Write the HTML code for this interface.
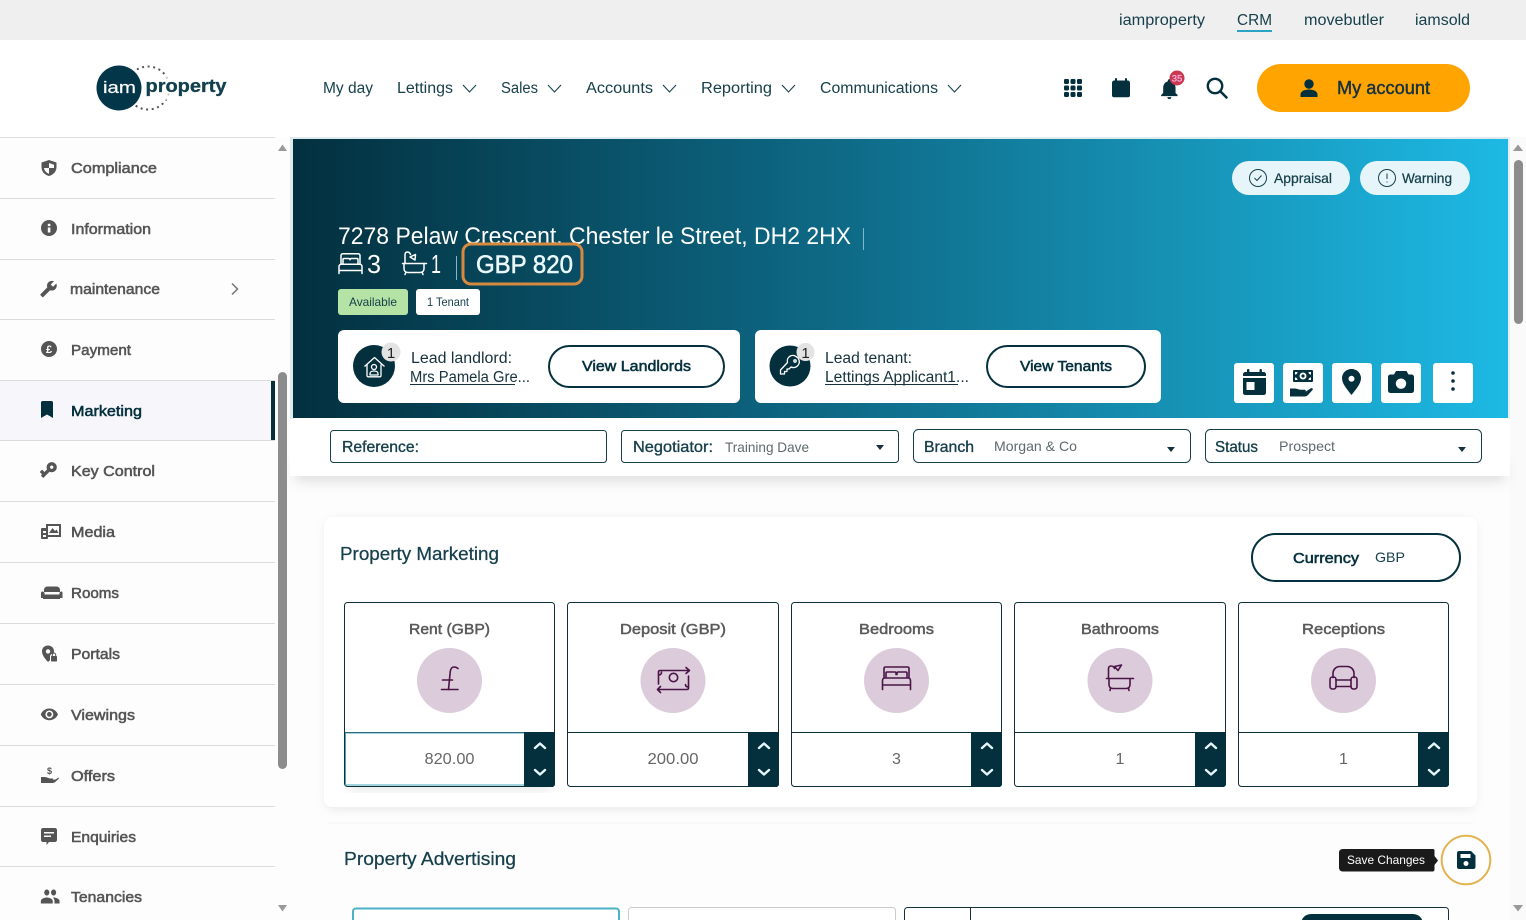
<!DOCTYPE html>
<html lang="en"><head><meta charset="utf-8"><title>iam property - Marketing</title>
<style>
html,body{margin:0;padding:0;width:1526px;height:920px;overflow:hidden;background:#fdfdfd}
svg{display:block;position:absolute;left:0;top:0}
text{font-family:"Liberation Sans",sans-serif;white-space:pre}
.top{font-size:15.5px;fill:#17404c}
.nav{font-size:15.5px;fill:#17404c}
.side{font-size:15px;fill:#555;stroke:#555;stroke-width:.55px}
.wh{fill:#fff}
.lead{font-size:15.5px;fill:#17323c}
.btn{font-size:15px;fill:#05303e;stroke:#05303e;stroke-width:.55px}
.flab{font-size:16px;fill:#17404c;stroke:#17404c;stroke-width:.35px}
.fval{font-size:14px;fill:#5e6a6e}
.lab{font-size:15px;fill:#5a5a5a;stroke:#5a5a5a;stroke-width:.5px;text-anchor:middle}
.val{font-size:16px;fill:#666;text-anchor:middle}
.h{font-size:18px;fill:#17404c;stroke:#17404c;stroke-width:.25px}
.ic{fill:none;stroke:#4a1446;stroke-width:1.6;stroke-linecap:round;stroke-linejoin:round}
.chev{fill:none;stroke:#17404c;stroke-width:1.1}
.sp{fill:none;stroke:#e6f5fa;stroke-width:2.4;stroke-linecap:round;stroke-linejoin:round}
.si{fill:#555}
.wi{fill:none;stroke:#fff;stroke-width:1.5;stroke-linejoin:round;stroke-linecap:round}
.line{stroke:#dcdcdc;stroke-width:1}
</style></head><body>
<svg width="1526" height="920" viewBox="0 0 1526 920" xmlns="http://www.w3.org/2000/svg">
<defs>
<linearGradient id="g" gradientUnits="userSpaceOnUse" x1="293" y1="0" x2="1508" y2="0">
<stop offset="0" stop-color="#03303f"/><stop offset=".45" stop-color="#0e6a87"/><stop offset=".72" stop-color="#1691b4"/><stop offset="1" stop-color="#1db9e4"/>
</linearGradient>
<filter id="s1" x="-5%" y="-100%" width="110%" height="300%"><feGaussianBlur stdDeviation="7"/></filter>
<filter id="s2" x="-5%" y="-10%" width="110%" height="120%"><feGaussianBlur stdDeviation="5"/></filter>
</defs>

<!-- top bar -->
<rect width="1526" height="40" fill="#efefef"/>
<rect y="40" width="1526" height="97" fill="#fff"/>
<text class="top" x="1119" y="25" textLength="86" lengthAdjust="spacingAndGlyphs">iamproperty</text>
<text class="top" x="1237" y="25" textLength="35" lengthAdjust="spacingAndGlyphs">CRM</text>
<rect x="1237" y="30" width="35" height="2" fill="#2aa3c4"/>
<text class="top" x="1304" y="25" textLength="80" lengthAdjust="spacingAndGlyphs">movebutler</text>
<text class="top" x="1415" y="25" textLength="55" lengthAdjust="spacingAndGlyphs">iamsold</text>

<!-- logo -->
<circle cx="148" cy="88" r="21.5" fill="none" stroke="#555" stroke-width="2" stroke-dasharray="2 3.6"/>
<circle cx="119" cy="88" r="22.5" fill="#04364a"/>
<text x="103" y="93" font-size="17" fill="#fff" stroke="#fff" stroke-width=".2" textLength="33" lengthAdjust="spacingAndGlyphs">iam</text>
<rect x="144" y="76" width="84" height="24" fill="#fff" opacity=".7"/>
<text x="145.500" y="92" font-size="18" font-weight="bold" fill="#12404e" stroke="#12404e" stroke-width=".3" textLength="81" lengthAdjust="spacingAndGlyphs">property</text>

<!-- nav -->
<text class="nav" x="323" y="93" textLength="50" lengthAdjust="spacingAndGlyphs">My day</text>
<text class="nav" x="397" y="93" textLength="56" lengthAdjust="spacingAndGlyphs">Lettings</text>
<path class="chev" d="M463 85l6.500 7 6.500-7"/>
<text class="nav" x="501" y="93" textLength="37" lengthAdjust="spacingAndGlyphs">Sales</text>
<path class="chev" d="M548 85l6.500 7 6.500-7"/>
<text class="nav" x="586" y="93" textLength="67" lengthAdjust="spacingAndGlyphs">Accounts</text>
<path class="chev" d="M663 85l6.500 7 6.500-7"/>
<text class="nav" x="701" y="93" textLength="71" lengthAdjust="spacingAndGlyphs">Reporting</text>
<path class="chev" d="M782 85l6.500 7 6.500-7"/>
<text class="nav" x="820" y="93" textLength="118" lengthAdjust="spacingAndGlyphs">Communications</text>
<path class="chev" d="M948 85l6.500 7 6.500-7"/>

<!-- header icons -->
<g fill="#04303e">
<rect x="1064" y="79" width="5" height="5" rx="1.200"/><rect x="1070.500" y="79" width="5" height="5" rx="1.200"/><rect x="1077" y="79" width="5" height="5" rx="1.200"/>
<rect x="1064" y="85.500" width="5" height="5" rx="1.200"/><rect x="1070.500" y="85.500" width="5" height="5" rx="1.200"/><rect x="1077" y="85.500" width="5" height="5" rx="1.200"/>
<rect x="1064" y="92" width="5" height="5" rx="1.200"/><rect x="1070.500" y="92" width="5" height="5" rx="1.200"/><rect x="1077" y="92" width="5" height="5" rx="1.200"/>
<path d="M1112 83c0-1.500 1-2.500 2.500-2.500h13c1.500 0 2.500 1 2.500 2.500v12.500c0 1-.8 1.800-1.800 1.800h-14.400c-1 0-1.800-.8-1.800-1.800z"/>
<rect x="1115" y="78" width="2" height="5" rx="1"/><rect x="1125" y="78" width="2" height="5" rx="1"/>
<g transform="translate(1157,76.500) scale(1.030)"><path d="M12 22c1.100 0 2-.9 2-2h-4c0 1.100.9 2 2 2zm6-6v-5c0-3.070-1.630-5.640-4.500-6.320V4c0-.83-.67-1.500-1.500-1.500s-1.500.67-1.500 1.500v.68C7.640 5.360 6 7.920 6 11v5l-2 2v1h16v-1l-2-2z"/></g>
</g>
<circle cx="1177" cy="78" r="7.500" fill="#c8384f"/>
<text x="1177" y="81.500" font-size="9.500" fill="#fbe" stroke="#fbe" stroke-width=".2" text-anchor="middle">35</text>
<circle cx="1215" cy="86" r="7.200" fill="none" stroke="#04303e" stroke-width="2.400"/>
<path d="M1220.500 91.500l6 6" stroke="#04303e" stroke-width="2.600" stroke-linecap="round"/>

<!-- account -->
<rect x="1257" y="64" width="213" height="48" rx="24" fill="#ffa400"/>
<g fill="#04303e"><circle cx="1309" cy="84" r="4.700"/><path d="M1300.500 97v-2.500c0-3.200 4-5 8.500-5s8.500 1.800 8.500 5V97z"/></g>
<text x="1337" y="94" font-size="18" fill="#17323c" stroke="#17323c" stroke-width=".45" textLength="93" lengthAdjust="spacingAndGlyphs">My account</text>

<!-- sidebar -->
<rect y="137" width="275" height="783" fill="#fdfdfd"/>
<rect y="381" width="271" height="59" fill="#f7f7fb"/>
<rect x="271" y="381" width="4" height="60" fill="#04303e"/>
<g class="line">
<path d="M0 137.500h275M0 198.500h275M0 259.500h275M0 319.500h275M0 380.500h275M0 440.500h275M0 501.500h275M0 562.500h275M0 623.500h275M0 684.500h275M0 745.500h275M0 806.500h275M0 866.500h275"/>
</g>
<text class="side" x="71" y="173" textLength="86" lengthAdjust="spacingAndGlyphs">Compliance</text>
<text class="side" x="71" y="234" textLength="80" lengthAdjust="spacingAndGlyphs">Information</text>
<text class="side" x="70" y="294" textLength="90" lengthAdjust="spacingAndGlyphs">maintenance</text>
<text class="side" x="71" y="355" textLength="60" lengthAdjust="spacingAndGlyphs">Payment</text>
<text x="71" y="416" font-size="15" fill="#04303e" stroke="#04303e" stroke-width=".55" textLength="71" lengthAdjust="spacingAndGlyphs">Marketing</text>
<text class="side" x="71" y="476" textLength="84" lengthAdjust="spacingAndGlyphs">Key Control</text>
<text class="side" x="71" y="537" textLength="44" lengthAdjust="spacingAndGlyphs">Media</text>
<text class="side" x="71" y="598" textLength="48" lengthAdjust="spacingAndGlyphs">Rooms</text>
<text class="side" x="71" y="659" textLength="49" lengthAdjust="spacingAndGlyphs">Portals</text>
<text class="side" x="71" y="720" textLength="64" lengthAdjust="spacingAndGlyphs">Viewings</text>
<text class="side" x="71" y="781" textLength="44" lengthAdjust="spacingAndGlyphs">Offers</text>
<text class="side" x="71" y="842" textLength="65" lengthAdjust="spacingAndGlyphs">Enquiries</text>
<text class="side" x="71" y="902" textLength="71" lengthAdjust="spacingAndGlyphs">Tenancies</text>
<path d="M232 283.500l5.500 5.500-5.500 5.500" fill="none" stroke="#777" stroke-width="1.500"/>

<!-- sidebar icons -->
<path class="si" fill-rule="evenodd" d="M49 160l7.500 2.500v4.500c0 4.500-3 7.800-7.500 9-4.500-1.200-7.500-4.500-7.500-9v-4.500zM49 163v5h-5c.3 2.700 2.300 4.800 5 5.800v-5.800h5v-3.200z"/>
<circle class="si" cx="49" cy="228" r="8"/>
<rect x="47.800" y="227.500" width="2.600" height="5" fill="#fff"/><rect x="47.800" y="223.800" width="2.600" height="2.300" fill="#fff"/>
<g transform="translate(57.500,280) scale(-.75,.75)"><path class="si" d="M22.700 19l-9.100-9.100c.9-2.300.4-5-1.500-6.900-2-2-5-2.400-7.400-1.300L9 6 6 9 1.600 4.700C.4 7.100.9 10.100 2.900 12.100c1.900 1.900 4.600 2.400 6.900 1.500l9.100 9.100c.4.400 1 .4 1.400 0l2.300-2.300c.5-.4.500-1.100.1-1.400z"/></g>
<circle class="si" cx="49" cy="349" r="8"/>
<text x="49" y="353" font-size="11" font-weight="bold" fill="#fff" text-anchor="middle">£</text>
<path d="M41 402.500c0-.8.700-1.500 1.500-1.500h9c.8 0 1.500.7 1.500 1.500V418l-6-3.500-6 3.500z" fill="#04303e"/>
<g transform="translate(38.500,460) scale(.85)"><path class="si" transform="rotate(135 12 12)" d="M12.650 10C11.830 7.670 9.610 6 7 6c-3.310 0-6 2.690-6 6s2.690 6 6 6c2.610 0 4.830-1.670 5.650-4H17v4h4v-4h2v-4H12.650zM7 14c-1.100 0-2-.9-2-2s.9-2 2-2 2 .9 2 2-.9 2-2 2z"/></g>
<g class="si"><path d="M46 524h15v13H48v-2h11v-9H48v3h-2z"/><path d="M49 533l3.500-5 2.500 3 1.500-1.500 2 3.500z"/><path fill-rule="evenodd" d="M41 529c0-.6.400-1 1-1h6v10c0 .6-.4 1-1 1h-5c-.6 0-1-.4-1-1zM43 531v2h3v-2zM43 535v2h3v-2z"/></g>
<g class="si"><path d="M44 590c0-2 1.500-3.500 3.500-3.500h9c2 0 3.500 1.500 3.500 3.500v2h-16z"/><path d="M41 593c0-.8.700-1.500 1.500-1.500s2 .7 2 1.500v1.500h15V593c0-.8 1-1.500 2-1.500s.5 0 .5 0 .5.700.5 1.500v5h-2.500v1h-17v-1H41z"/></g>
<g class="si"><path fill-rule="evenodd" d="M48 645.500c3.500 0 6 2.500 6 5.700 0 1-.2 1.800-.6 2.500-2-.2-3.400 1.300-3.400 3v3.500l-2 1.800c-3-3.300-6-7-6-10.800 0-3.200 2.500-5.700 6-5.700zM48 649.200a2.200 2.200 0 100 4.400 2.200 2.200 0 000-4.400z"/><rect x="51" y="656" width="6" height="5.500" rx=".7"/><path d="M52.300 656v-1.200a1.700 1.700 0 013.400 0v1.200" fill="none" stroke="#555" stroke-width="1"/></g>
<g transform="translate(40,705) scale(.78)"><path class="si" d="M12 4.500C7 4.500 2.730 7.610 1 12c1.730 4.390 6 7.500 11 7.500s9.270-3.110 11-7.500c-1.730-4.390-6-7.500-11-7.500zM12 17c-2.760 0-5-2.240-5-5s2.240-5 5-5 5 2.240 5 5-2.240 5-5 5zm0-8c-1.660 0-3 1.340-3 3s1.340 3 3 3 3-1.340 3-3-1.340-3-3-3z"/></g>
<g class="si"><path d="M41 777h3.500c2.500 0 4 1.500 6 1.500h2c1 0 1 1.500 0 1.500h-2.500l5.500-.5 3-2 .5 1-3.800 3.500c-1 .8-2 1-3.200 1H41z"/></g>
<text x="49.500" y="774" font-size="9" font-weight="bold" fill="#555" text-anchor="middle">$</text>
<path class="si" fill-rule="evenodd" d="M43 828h12c1.100 0 2 .9 2 2v10c0 1.100-.9 2-2 2h-6l-2.500 3v-3H43c-1.100 0-2-.9-2-2v-10c0-1.100.9-2 2-2zM44 832v1.500h10V832zM44 835.500V837h7v-1.500z"/>
<g transform="translate(40,884.500) scale(.85,1)"><path class="si" d="M16 11c1.660 0 2.990-1.340 2.990-3S17.660 5 16 5c-1.660 0-3 1.340-3 3s1.340 3 3 3zm-8 0c1.660 0 2.990-1.340 2.990-3S9.660 5 8 5C6.340 5 5 6.340 5 8s1.340 3 3 3zm0 2c-2.330 0-7 1.170-7 3.500V19h14v-2.500c0-2.330-4.670-3.500-7-3.500zm8 0c-.29 0-.62.020-.97.050 1.160.84 1.970 1.970 1.970 3.450V19h6v-2.500c0-2.330-4.670-3.500-7-3.500z"/></g>

<!-- sidebar scrollbar -->
<path d="M278 151l4.500-6.500 4.500 6.500z" fill="#999"/>
<rect x="278" y="372" width="9" height="397" rx="4.500" fill="#8c8c8c"/>
<path d="M278 905l4.500 6.500 4.500-6.500z" fill="#999"/>

<!-- main scrollbar -->
<rect x="1510" y="137" width="16" height="783" fill="#fafafa"/>
<path d="M1513 151l5-6.500 5 6.500z" fill="#999"/>
<rect x="1514" y="160" width="9" height="164" rx="4.500" fill="#8c8c8c"/>
<path d="M1513 905l5 6.500 5-6.500z" fill="#999"/>

<!-- hero -->
<rect x="295" y="466" width="1210" height="14" fill="#c8c8c8" filter="url(#s1)" opacity=".7"/>
<rect x="290" y="137" width="1220" height="339" fill="#fff"/>
<rect x="290" y="137" width="1220" height="2" fill="#dfeaee"/>
<rect x="290" y="139" width="3" height="280" fill="#dfeaee"/>
<rect x="1508" y="137" width="2" height="282" fill="#e8eef0"/>
<rect x="293" y="139" width="1215" height="279" fill="url(#g)"/>

<rect x="1232" y="161" width="118" height="34" rx="17" fill="#e6f5fa"/>
<circle cx="1258" cy="178" r="8.500" fill="none" stroke="#17404c" stroke-width="1"/>
<path d="M1254.500 178l2.500 2.500 4.500-5" fill="none" stroke="#17404c" stroke-width="1"/>
<text x="1274" y="183" font-size="14" fill="#17404c" stroke="#17404c" stroke-width=".25" textLength="58" lengthAdjust="spacingAndGlyphs">Appraisal</text>
<rect x="1360" y="161" width="110" height="34" rx="17" fill="#e6f5fa"/>
<circle cx="1387" cy="178" r="8.500" fill="none" stroke="#17404c" stroke-width="1"/>
<path d="M1387 173.500v5.500M1387 181.500v1" fill="none" stroke="#17404c" stroke-width="1"/>
<text x="1402" y="183" font-size="14" fill="#17404c" stroke="#17404c" stroke-width=".25" textLength="50" lengthAdjust="spacingAndGlyphs">Warning</text>

<text class="wh" x="338" y="244" font-size="24" textLength="513" lengthAdjust="spacingAndGlyphs">7278 Pelaw Crescent, Chester le Street, DH2 2HX</text>
<path d="M863.500 228v22" stroke="#7fb8c8" stroke-width="1"/>

<!-- bed small -->
<g class="wi"><path d="M341 264v-8.500c0-1 .8-1.800 1.800-1.800h15.400c1 0 1.800.8 1.800 1.800v8.500"/><path d="M343 264v-4.500c0-.6.400-1 1-1h4.800c.6 0 1.200.5 1.200 1.200v-.2c0-.5.600-1 1.200-1h5.800c.6 0 1 .4 1 1v4.500"/><path d="M339 273.500v-7c0-1.300 1-2.300 2.300-2.300h18.400c1.300 0 2.300 1 2.300 2.300v7M339 270.500h23"/></g>
<text class="wh" x="367" y="273" font-size="26" textLength="14" lengthAdjust="spacingAndGlyphs">3</text>
<!-- bath small -->
<g class="wi"><path d="M405 263v-8.200c0-1.800 1-2.800 2.500-2.800s2.500 1 3 2.500"/><path d="M410 257l5.500-2.500-.5 5.500z" fill="none"/><path d="M402.500 263.500h24"/><path d="M404 263.500v5c0 2.500 1.500 4 4 4h12c2.500 0 4-1.500 4-4v-5M406 272l-1 2.500M422 272l1 2.500"/></g>
<text class="wh" x="431" y="273" font-size="26" textLength="10" lengthAdjust="spacingAndGlyphs">1</text>
<path d="M456.500 256v24" stroke="#7fb8c8" stroke-width="1"/>

<rect x="463" y="244" width="119" height="40" rx="8" fill="url(#g)" stroke="#d58a40" stroke-width="3"/>
<text x="476" y="273" font-size="25" fill="#eaf8fb" stroke="#eaf8fb" stroke-width=".55" textLength="97" lengthAdjust="spacingAndGlyphs">GBP 820</text>

<rect x="338" y="289" width="70" height="26" rx="3" fill="#b5e3a5"/>
<text x="349" y="306" font-size="12" fill="#17404c" textLength="48" lengthAdjust="spacingAndGlyphs">Available</text>
<rect x="416" y="289" width="64" height="26" rx="3" fill="#fff"/>
<text x="427" y="306" font-size="12" fill="#17404c" textLength="42" lengthAdjust="spacingAndGlyphs">1 Tenant</text>

<!-- landlord -->
<rect x="338" y="330" width="402" height="73" rx="6" fill="#fff"/>
<circle cx="374" cy="366" r="21" fill="#04303e"/>
<g fill="none" stroke="#fff" stroke-width="1.300" stroke-linejoin="round"><path d="M364.500 366.500l10-9 10 9"/><path d="M367 364.500v11c0 .8.500 1.300 1.300 1.300h11.400c.8 0 1.300-.5 1.300-1.300v-11"/><circle cx="374" cy="367" r="2.500"/><path d="M370 375v-1.500c0-1.500 1.700-2.500 4-2.500s4 1 4 2.500v1.500z"/></g>
<circle cx="391" cy="352" r="9.500" fill="#e3e3e3"/>
<text x="391" y="358" font-size="15" fill="#222" text-anchor="middle">1</text>
<text class="lead" x="411" y="363" textLength="101" lengthAdjust="spacingAndGlyphs">Lead landlord:</text>
<text class="lead" x="410" y="382" textLength="120" lengthAdjust="spacingAndGlyphs">Mrs Pamela Gre...</text>
<rect x="410" y="384" width="105" height="1" fill="#17323c"/>
<rect x="549" y="346" width="175" height="41" rx="20.500" fill="#fff" stroke="#05303e" stroke-width="2"/>
<text class="btn" x="582" y="371" textLength="109" lengthAdjust="spacingAndGlyphs">View Landlords</text>

<!-- tenant -->
<rect x="755" y="330" width="406" height="73" rx="6" fill="#fff"/>
<circle cx="790" cy="366" r="20.500" fill="#04303e"/>
<g fill="none" stroke="#fff" stroke-width="1.300" stroke-linejoin="round"><path d="M796 356.500a5.500 5.500 0 00-8.500 6l-7 7.500v4h4v-2.500h2.500v-2.500h2l2-2a5.500 5.500 0 005-10.500z"/><circle cx="795" cy="361" r="1.200"/></g>
<circle cx="805.500" cy="352" r="9" fill="#e3e3e3"/>
<text x="805.500" y="358" font-size="15" fill="#222" text-anchor="middle">1</text>
<text class="lead" x="825" y="363" textLength="87" lengthAdjust="spacingAndGlyphs">Lead tenant:</text>
<text class="lead" x="825" y="382" textLength="144" lengthAdjust="spacingAndGlyphs">Lettings Applicant1...</text>
<rect x="825" y="384" width="133" height="1" fill="#17323c"/>
<rect x="987" y="346" width="158" height="41" rx="20.500" fill="#fff" stroke="#05303e" stroke-width="2"/>
<text class="btn" x="1020" y="371" textLength="92" lengthAdjust="spacingAndGlyphs">View Tenants</text>

<!-- hero icon buttons -->
<g fill="#fff"><rect x="1234" y="363" width="40" height="40" rx="3"/><rect x="1283" y="363" width="40" height="40" rx="3"/><rect x="1332" y="363" width="40" height="40" rx="3"/><rect x="1381" y="363" width="40" height="40" rx="3"/><rect x="1433" y="363" width="40" height="40" rx="3"/></g>
<g fill="#04303e">
<!-- calendar -->
<rect x="1247" y="369" width="2.400" height="4" rx="1"/><rect x="1259.500" y="369" width="2.400" height="4" rx="1"/>
<path d="M1243 376v-1.500c0-1.500 1-2.500 2.500-2.500h18c1.500 0 2.500 1 2.500 2.500v1.500z"/>
<path fill-rule="evenodd" d="M1243 378h23v14.500c0 1.500-1 2.500-2.500 2.500h-18c-1.500 0-2.500-1-2.500-2.500zM1246.500 382v8h8v-8z"/>
<!-- money hand -->
<path fill-rule="evenodd" d="M1294 370h18c.6 0 1 .4 1 1v10c0 .6-.4 1-1 1h-18c-.6 0-1-.4-1-1v-10c0-.6.400-1 1-1zM1295 372v2.500c1.400 0 2.500-1 2.500-2.500zM1308.500 372c0 1.500 1.100 2.500 2.500 2.500V372zM1295 377.500v2.500h2.500c0-1.500-1.100-2.500-2.500-2.500zM1311 377.500c-1.400 0-2.500 1-2.500 2.500h2.500zM1303 372.500a3.500 3.500 0 100 7 3.500 3.500 0 000-7z"/>
<circle cx="1303" cy="376" r="1.600" fill="#04303e"/>
<path d="M1290 388.500h4.500c2.500 0 4 1.200 6 1.200h4c1.700 0 1.700 2.300 0 2.300h-4.500l5 0 5.500-3.500c1.500-1 3 .3 2 1.500l-4.500 5c-1 1-2.200 1.500-3.500 1.500H1290z"/>
<!-- pin -->
<path fill-rule="evenodd" d="M1351.500 369c5.300 0 9.500 4 9.500 9.300 0 5.500-5.500 11.500-9.500 16.700-4-5.200-9.500-11.200-9.500-16.700 0-5.300 4.200-9.300 9.500-9.300zM1351.500 375.700a3 3 0 100 6 3 3 0 000-6z"/>
<!-- camera -->
<path fill-rule="evenodd" d="M1396 371h10.500l2 3.500h3c1.400 0 2.500 1.100 2.500 2.500v13.500c0 1.400-1.100 2.500-2.500 2.500h-21c-1.400 0-2.500-1.100-2.500-2.500V377c0-1.400 1.100-2.500 2.500-2.500h3.500zM1401 378.500a5.200 5.200 0 100 10.400 5.200 5.200 0 000-10.400z"/>
<circle cx="1453" cy="373" r="1.800"/><circle cx="1453" cy="381" r="1.800"/><circle cx="1453" cy="389" r="1.800"/>
</g>

<!-- filters -->
<g fill="#fff" stroke="#17404c" stroke-width="1">
<rect x="330.500" y="430.500" width="276" height="32" rx="3"/>
<rect x="621.500" y="430.500" width="277" height="32" rx="3"/>
<rect x="913.500" y="429.500" width="277" height="33" rx="5"/>
<rect x="1205.500" y="429.500" width="276" height="33" rx="5"/>
</g>
<text class="flab" x="342" y="452" textLength="77" lengthAdjust="spacingAndGlyphs">Reference:</text>
<text class="flab" x="633" y="452" textLength="80" lengthAdjust="spacingAndGlyphs">Negotiator:</text>
<text class="fval" x="725" y="452" textLength="84" lengthAdjust="spacingAndGlyphs">Training Dave</text>
<path d="M876 445h8l-4 5z" fill="#17323c"/>
<text class="flab" x="924" y="452" textLength="50" lengthAdjust="spacingAndGlyphs">Branch</text>
<text class="fval" x="994" y="451" textLength="83" lengthAdjust="spacingAndGlyphs">Morgan &amp; Co</text>
<path d="M1167 447h8l-4 5z" fill="#17323c"/>
<text class="flab" x="1215" y="452" textLength="43" lengthAdjust="spacingAndGlyphs">Status</text>
<text class="fval" x="1279" y="451" textLength="56" lengthAdjust="spacingAndGlyphs">Prospect</text>
<path d="M1458 447h8l-4 5z" fill="#17323c"/>

<!-- property marketing card -->
<rect x="326" y="520" width="1149" height="289" rx="8" fill="#d8d8d8" filter="url(#s2)" opacity=".6"/>
<rect x="324" y="517" width="1153" height="290" rx="8" fill="#fff"/>
<text class="h" x="340" y="560" textLength="159" lengthAdjust="spacingAndGlyphs">Property Marketing</text>
<rect x="1252" y="534" width="208" height="47" rx="23.500" fill="#fff" stroke="#05303e" stroke-width="2"/>
<text class="btn" x="1293" y="563" textLength="66" lengthAdjust="spacingAndGlyphs">Currency</text>
<text x="1375" y="562" font-size="14" fill="#17404c" textLength="30" lengthAdjust="spacingAndGlyphs">GBP</text>

<!-- boxes -->
<rect x="350" y="775" width="200" height="16" fill="#bbb" filter="url(#s2)" opacity=".3"/>
<g fill="#fff" stroke="#0e2f3a" stroke-width="1">
<rect x="344.500" y="602.500" width="210" height="184" rx="3"/>
<rect x="567.500" y="602.500" width="211" height="184" rx="3"/>
<rect x="791.500" y="602.500" width="210" height="184" rx="3"/>
<rect x="1014.500" y="602.500" width="211" height="184" rx="3"/>
<rect x="1238.500" y="602.500" width="210" height="184" rx="3"/>
</g>
<path d="M345 732.500h209M568 732.500h210M792 732.500h209M1015 732.500h210M1239 732.500h209" stroke="#0e2f3a" stroke-width="1"/>
<g fill="#04303e">
<path d="M524 732h31v52c0 1.700-1.300 3-3 3h-28z"/>
<path d="M748 732h31v52c0 1.700-1.300 3-3 3h-28z"/>
<path d="M971 732h31v52c0 1.700-1.300 3-3 3h-28z"/>
<path d="M1195 732h31v52c0 1.700-1.300 3-3 3h-28z"/>
<path d="M1418 732h31v52c0 1.700-1.300 3-3 3h-28z"/>
</g>
<path d="M524 733H345.500v52H524" fill="#fff" stroke="#45a9bb" stroke-width="1"/>
<g class="sp">
<path d="M535 748l5-4.500 5 4.500M535 770l5 4.500 5-4.500"/>
<path d="M759 748l5-4.500 5 4.500M759 770l5 4.500 5-4.500"/>
<path d="M982 748l5-4.500 5 4.500M982 770l5 4.500 5-4.500"/>
<path d="M1206 748l5-4.500 5 4.500M1206 770l5 4.500 5-4.500"/>
<path d="M1429 748l5-4.500 5 4.500M1429 770l5 4.500 5-4.500"/>
</g>
<text class="lab" x="449.500" y="634" textLength="81" lengthAdjust="spacingAndGlyphs">Rent (GBP)</text>
<text class="lab" x="673" y="634" textLength="106" lengthAdjust="spacingAndGlyphs">Deposit (GBP)</text>
<text class="lab" x="896.500" y="634" textLength="75" lengthAdjust="spacingAndGlyphs">Bedrooms</text>
<text class="lab" x="1120" y="634" textLength="78" lengthAdjust="spacingAndGlyphs">Bathrooms</text>
<text class="lab" x="1343.500" y="634" textLength="83" lengthAdjust="spacingAndGlyphs">Receptions</text>
<g fill="#dccbdb"><circle cx="449.500" cy="680.500" r="32.500"/><circle cx="673" cy="680.500" r="32.500"/><circle cx="896.500" cy="680.500" r="32.500"/><circle cx="1120" cy="680.500" r="32.500"/><circle cx="1343.500" cy="680.500" r="32.500"/></g>
<text class="val" x="449.500" y="764" textLength="50" lengthAdjust="spacingAndGlyphs">820.00</text>
<text class="val" x="673" y="764" textLength="51" lengthAdjust="spacingAndGlyphs">200.00</text>
<text class="val" x="896.500" y="764">3</text>
<text class="val" x="1120" y="764">1</text>
<text class="val" x="1343.500" y="764">1</text>

<!-- purple icons -->
<g class="ic">
<path d="M458 668.500c-1-.9-2.500-1.500-4-1.500-2.500 0-3.500 2-3.800 5l-1.700 17.500"/><path d="M442.500 680h10M441.500 689.500h16.500"/>
<path d="M658.500 672c0-.9.600-1.500 1.500-1.500h29M686 667.500l3.500 3-3.500 3"/><path d="M688.500 676v12c0 .9-.6 1.500-1.500 1.500h-29M660.500 686.500l-3 3 3 3"/><path d="M658.500 672v12"/><circle cx="673.500" cy="677.500" r="4.200"/><path d="M658.500 675c2 0 3-.6 3-3M688.500 687c-2 0-3-.7-3-2.500"/>
<path d="M884 678v-9.500c0-1 .7-1.500 1.500-1.500h22c.9 0 1.500.5 1.500 1.500v9.500M886 677v-4c0-.7.400-1 1-1h8c.7 0 1 .5 1 1v1.500M897 674.500V673c0-.7.400-1 1-1h8c.6 0 1 .3 1 1v4"/><path d="M882.500 689.500v-9c0-1.500 1-2.500 2.500-2.500h23c1.500 0 2.500 1 2.500 2.500v9M882.500 685h28"/>
<path d="M1108.500 678v-9c0-2 1-3 2.500-3s3 1 3.500 2.500"/><path d="M1114.500 666.500l7-1.500-3.500 5.500z"/><path d="M1106.500 678.500h27"/><path d="M1109 679v5.500c0 2.500 1.500 4 4 4h13c2.500 0 4-1.500 4-4V679M1110.500 688l-.5 2.500M1128.500 688l.5 2.500"/>
<path d="M1333 677.500v-4c0-4 3-7 7-7h7c4 0 7 3 7 7v4"/><rect x="1330" y="677" width="6" height="12" rx="2.500"/><rect x="1351" y="677" width="6" height="12" rx="2.500"/><path d="M1336 680h15M1336 686.500h15"/>
</g>

<!-- property advertising card -->
<rect x="328" y="823" width="1145" height="97" fill="#fdfdfd"/>
<path d="M328 823h1145" stroke="#f4f4f4"/>
<text class="h" x="344" y="865" textLength="172" lengthAdjust="spacingAndGlyphs">Property Advertising</text>
<rect x="353" y="908.500" width="266" height="20" rx="3" fill="#fff" stroke="#4ab3c6" stroke-width="2"/>
<rect x="628.500" y="907.500" width="267" height="20" rx="3" fill="#fff" stroke="#ccc" stroke-width="1"/>
<rect x="904.500" y="907.500" width="544" height="20" rx="3" fill="#fff" stroke="#17323c" stroke-width="1"/>
<path d="M970.500 908v12" stroke="#17323c" stroke-width="1"/>
<rect x="1301" y="914" width="122" height="20" rx="10" fill="#04303e"/>

<!-- save -->
<path d="M1343 849h90c1 0 1.500.7 1.500 1.500v5.500l3.500 4.500-3.500 4.500v4.500c0 1.200-.8 2-2 2H1343c-2.400 0-4-1.500-4-4v-15c0-2 1.600-3.500 4-3.500z" fill="#1a1a1a"/>
<text x="1347" y="864" font-size="12" fill="#fff" textLength="78" lengthAdjust="spacingAndGlyphs">Save Changes</text>
<circle cx="1466" cy="860" r="24.300" fill="#fefefe" stroke="#e4b34f" stroke-width="2"/>
<path fill-rule="evenodd" d="M1459 851h12l4.500 4.500V867c0 1.100-.9 2-2 2h-14.500c-1.100 0-2-.9-2-2v-14c0-1.100.9-2 2-2zM1460.500 854v4h10v-4zM1466 861a2.500 2.500 0 100 5 2.500 2.500 0 000-5z" fill="#04303e"/>
</svg>
</body></html>
